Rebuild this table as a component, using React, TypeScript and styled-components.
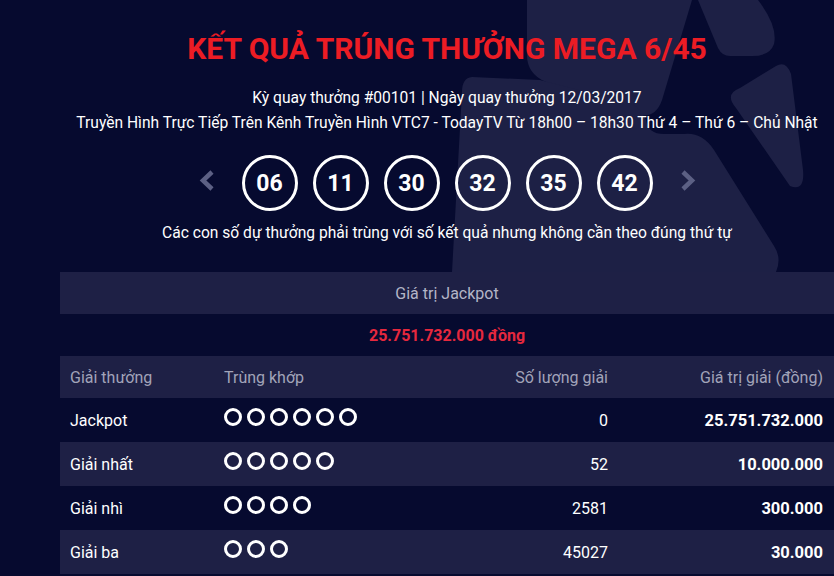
import React from 'react';
import styled, { createGlobalStyle } from 'styled-components';

const Global = createGlobalStyle`
  html, body { margin: 0; padding: 0; background: #060a2f; }
  body { font-family: Roboto, "Noto Sans", "Liberation Sans", sans-serif; }
`;

const Page = styled.div`
  position: relative;
  width: 834px;
  height: 576px;
  overflow: hidden;
  background: #060a2f;
`;

const Deco = styled.svg`
  position: absolute;
  left: 0;
  top: 0;
  width: 834px;
  height: 272px;
  pointer-events: none;
`;

const Content = styled.div`
  position: relative;
  margin-left: 60px;
  width: 774px;
  display: flex;
  flex-direction: column;
  align-items: center;
`;

const Title = styled.h1`
  margin: 31px 0 0;
  font-size: 30px;
  line-height: 36px;
  font-weight: 700;
  color: #ec1c24;
  white-space: nowrap;
`;

const InfoLine = styled.div<{ $gap?: number }>`
  margin-top: ${(p) => p.$gap ?? 0}px;
  font-size: 15.6px;
  line-height: 25px;
  color: #ffffff;
  white-space: nowrap;
`;

const BallRow = styled.div`
  margin-top: 19px;
  display: flex;
  align-items: center;
  gap: 15px;
`;

const Arrow = styled.svg<{ $side: 'left' | 'right' }>`
  width: 16px;
  height: 21px;
  margin-bottom: 5px;
  ${(p) => (p.$side === 'left' ? 'margin-right: 12px;' : 'margin-left: 12px;')}
`;

const Ball = styled.div`
  width: 56px;
  height: 56px;
  box-sizing: border-box;
  border: 3px solid #ffffff;
  border-radius: 50%;
  display: flex;
  align-items: center;
  justify-content: center;
  color: #ffffff;
  font-size: 23px;
  font-weight: 700;
`;

const Table = styled.div`
  margin-top: 26px;
  width: 774px;
  display: flex;
  flex-direction: column;
`;

const Band = styled.div<{ $light?: boolean; $h?: number }>`
  height: ${(p) => p.$h ?? 42}px;
  background: ${(p) => (p.$light ? '#1e2045' : 'transparent')};
  display: flex;
  align-items: center;
  justify-content: center;
  font-size: 16px;
`;

const JackpotLabel = styled.span`
  color: #b3b5c7;
`;

const JackpotValue = styled.span`
  color: #e6283e;
  font-weight: 700;
`;

const Row = styled.div<{ $light?: boolean; $head?: boolean }>`
  height: ${(p) => (p.$head ? 42 : 44)}px;
  display: grid;
  grid-template-columns: 154px 234px 150px 215px;
  align-items: center;
  padding: 0 11px 0 10px;
  background: ${(p) => (p.$light ? '#1e2045' : 'transparent')};
  color: ${(p) => (p.$head ? '#a2a4b9' : '#ffffff')};
  font-size: 16px;
`;

const Cell = styled.div<{ $right?: boolean; $bold?: boolean }>`
  text-align: ${(p) => (p.$right ? 'right' : 'left')};
  font-weight: ${(p) => (p.$bold ? 700 : 400)};
  font-size: ${(p) => (p.$bold ? 16.5 : 16)}px;
  white-space: nowrap;
`;

const Dots = styled.div`
  display: flex;
  gap: 5px;
  margin-top: -6px;
`;

const Dot = styled.span`
  width: 18px;
  height: 18px;
  box-sizing: border-box;
  border: 3px solid #ffffff;
  border-radius: 50%;
`;

const numbers = ['06', '11', '30', '32', '35', '42'];

const prizes = [
  { name: 'Jackpot', match: 6, count: '0', value: '25.751.732.000' },
  { name: 'Giải nhất', match: 5, count: '52', value: '10.000.000' },
  { name: 'Giải nhì', match: 4, count: '2581', value: '300.000' },
  { name: 'Giải ba', match: 3, count: '45027', value: '30.000' },
];

export default function App() {
  return (
    <Page>
      <Global />
      <Deco viewBox="0 0 834 272">
        <g fill="#1d2045">
          <path d="M527 0 L692 0 L662 100 Q655 120 636 114 L546 82 Q527 74 527 55 Z" />
          <path d="M698 0 L758 0 Q778 26 774 44 Q770 56 752 56 L730 56 Q722 56 718 48 Z" />
          <path d="M776 66 Q786 60 791 74 L803 170 Q805 192 790 186 L736 108 Q724 94 740 88 Z" />
          <path d="M472 77 Q462 78 462 92 L452 272 L776 272 Q782 258 774 246 L714 150 Q702 132 684 134 L664 134 Q648 134 646 120 L640 110 Q630 100 610 98 L540 80 Z" />
        </g>
      </Deco>
      <Content>
        <Title>KẾT QUẢ TRÚNG THƯỞNG MEGA 6/45</Title>
        <InfoLine $gap={19}>Kỳ quay thưởng #00101 | Ngày quay thưởng 12/03/2017</InfoLine>
        <InfoLine>
          Truyền Hình Trực Tiếp Trên Kênh Truyền Hình VTC7 - TodayTV Từ 18h00 – 18h30 Thứ 4 – Thứ 6 – Chủ Nhật
        </InfoLine>
        <BallRow>
          <Arrow $side="left" viewBox="0 0 16 21">
            <polyline points="13,2 4,10.5 13,19" fill="none" stroke="#5c6084" strokeWidth="4.5" />
          </Arrow>
          {numbers.map((n) => (
            <Ball key={n}>{n}</Ball>
          ))}
          <Arrow $side="right" viewBox="0 0 16 21">
            <polyline points="3,2 12,10.5 3,19" fill="none" stroke="#5c6084" strokeWidth="4.5" />
          </Arrow>
        </BallRow>
        <InfoLine $gap={10}>Các con số dự thưởng phải trùng với số kết quả nhưng không cần theo đúng thứ tự</InfoLine>
        <Table>
          <Band $light>
            <JackpotLabel>Giá trị Jackpot</JackpotLabel>
          </Band>
          <Band>
            <JackpotValue>25.751.732.000 đồng</JackpotValue>
          </Band>
          <Row $light $head>
            <Cell>Giải thưởng</Cell>
            <Cell>Trùng khớp</Cell>
            <Cell $right>Số lượng giải</Cell>
            <Cell $right>Giá trị giải (đồng)</Cell>
          </Row>
          {prizes.map((p, i) => (
            <Row key={p.name} $light={i % 2 === 1}>
              <Cell>{p.name}</Cell>
              <Dots>
                {Array.from({ length: p.match }).map((_, k) => (
                  <Dot key={k} />
                ))}
              </Dots>
              <Cell $right>{p.count}</Cell>
              <Cell $right $bold>{p.value}</Cell>
            </Row>
          ))}
        </Table>
      </Content>
    </Page>
  );
}
